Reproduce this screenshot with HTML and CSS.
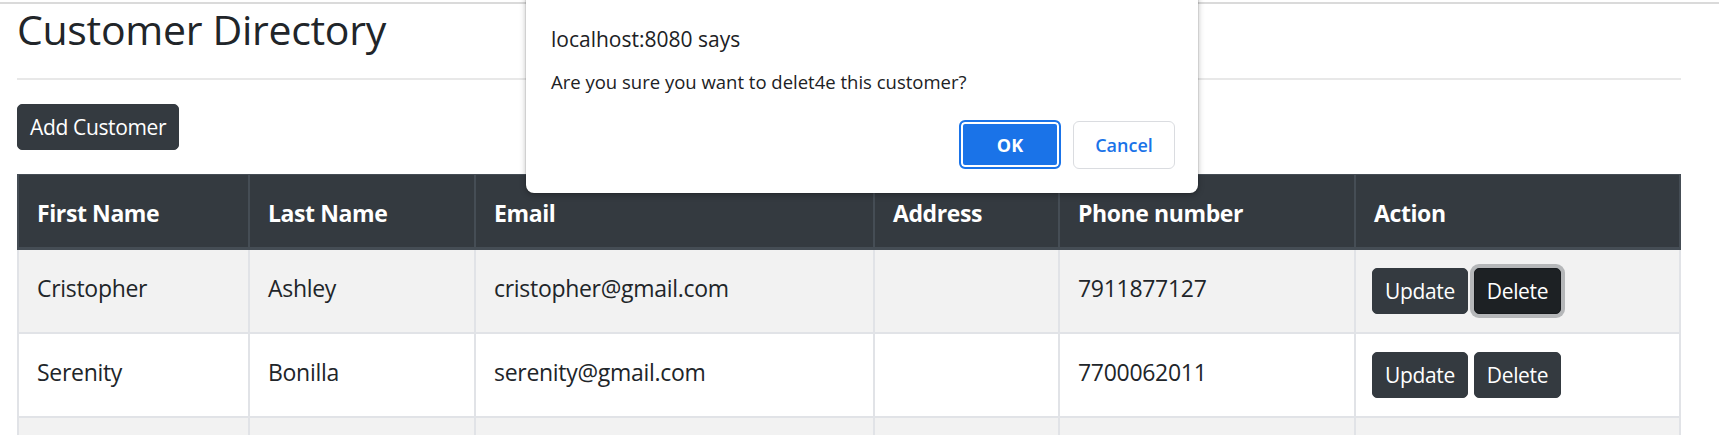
FILE: index.html
```html
<!DOCTYPE html>
<html lang="en">
<head>
<meta charset="utf-8">
<title>Customer Directory</title>
<link rel="stylesheet" href="styles.css">
</head>
<body>
<div class="edge"></div>
<main class="page">
  <h1 class="title">Customer Directory</h1>
  <hr class="rule">
  <button class="btn add">Add Customer</button>
  <table class="grid">
    <thead>
      <tr>
        <th class="c-first">First Name</th>
        <th class="c-last">Last Name</th>
        <th class="c-email">Email</th>
        <th class="c-addr">Address</th>
        <th class="c-phone">Phone number</th>
        <th class="c-action">Action</th>
      </tr>
    </thead>
    <tbody>
      <tr class="striped">
        <td>Cristopher</td>
        <td>Ashley</td>
        <td>cristopher@gmail.com</td>
        <td></td>
        <td>7911877127</td>
        <td class="actions"><button class="btn">Update</button> <button class="btn focused">Delete</button></td>
      </tr>
      <tr>
        <td>Serenity</td>
        <td>Bonilla</td>
        <td>serenity@gmail.com</td>
        <td></td>
        <td>7700062011</td>
        <td class="actions"><button class="btn">Update</button> <button class="btn">Delete</button></td>
      </tr>
      <tr class="striped">
        <td>&nbsp;</td>
        <td>&nbsp;</td>
        <td>&nbsp;</td>
        <td>&nbsp;</td>
        <td>&nbsp;</td>
        <td>&nbsp;</td>
      </tr>
    </tbody>
  </table>
</main>
<div class="dialog" role="alertdialog">
  <div class="dialog-title">localhost:8080 says</div>
  <div class="dialog-msg">Are you sure you want to delet4e this customer?</div>
  <div class="dialog-actions">
    <button class="dbtn ok">OK</button>
    <button class="dbtn cancel">Cancel</button>
  </div>
</div>
</body>
</html>
```
FILE: styles.css
```css
html, body {
  margin: 0;
  background: #fff;
}
body {
  font-family: "Open Sans", "Noto Sans", sans-serif;
  color: #212529;
  position: relative;
  height: 435px;
  overflow: hidden;
}
.edge {
  height: 2px;
  margin-top: 2px;
  background: #dadada;
}
.page {
  padding: 0 38px 0 17px;
}
.title {
  margin: 0;
  font-size: 41px;
  line-height: 50px;
  font-weight: 500;
  letter-spacing: -0.3px;
  color: #212529;
}
.rule {
  margin: 24px 0 0;
  border: 0;
  border-top: 2px solid #e8e8e8;
  height: 0;
}
.btn {
  font-family: inherit;
  font-size: 21px;
  letter-spacing: -0.35px;
  line-height: 32px;
  padding: 6px 12px;
  border: 1px solid #343a40;
  background: #343a40;
  color: #fff;
  border-radius: 5px;
  vertical-align: top;
}
.btn.focused {
  background: #1d2124;
  border-color: #171a1d;
  box-shadow: 0 0 0 4px rgba(82, 88, 93, 0.38);
}
.add {
  display: block;
  margin-top: 24px;
}
.grid {
  width: 1664px;
  margin-top: 24px;
  table-layout: fixed;
  border-collapse: separate;
  border-spacing: 0;
  font-size: 23px;
  letter-spacing: -0.3px;
  line-height: 40px;
}
.grid th, .grid td {
  box-sizing: border-box;
  padding: 18px 18px;
  text-align: left;
  vertical-align: top;
  white-space: nowrap;
}
.grid th {
  padding: 20px 18px 16px;
  line-height: 36px;
  letter-spacing: -0.4px;
  background: #343a40;
  color: #fff;
  font-weight: 700;
  border-top: 1px solid #454d55;
  border-bottom: 3px solid #454d55;
  border-right: 2px solid #454d55;
}
.grid th:first-child {
  border-left: 2px solid #454d55;
}
.grid td {
  border-right: 2px solid #e1e3e7;
  border-bottom: 2px solid #e1e3e7;
}
.grid td:first-child {
  border-left: 2px solid #e1e3e7;
}
.grid td.actions {
  padding-left: 16px;
  letter-spacing: 0;
}
.grid tr.striped td {
  background: #f2f2f2;
}
.c-first { width: 233px; }
.c-last { width: 226px; }
.c-email { width: 399px; }
.c-addr { width: 185px; }
.c-phone { width: 296px; }
.c-action { width: 325px; }

.dialog {
  position: absolute;
  left: 526px;
  top: -10px;
  width: 672px;
  height: 203px;
  box-sizing: border-box;
  padding: 35px 23px 0 25px;
  background: #fff;
  border-radius: 8px;
  box-shadow: 0 0 0 1px rgba(0, 0, 0, 0.07), 0 2px 6px rgba(0, 0, 0, 0.28);
  color: #202124;
  display: flex;
  flex-direction: column;
}
.dialog-title {
  font-size: 21px;
  line-height: 28px;
}
.dialog-msg {
  margin-top: 16px;
  font-size: 18.5px;
  line-height: 26px;
}
.dialog-actions {
  margin-top: 25px;
  display: flex;
  justify-content: flex-end;
  align-items: flex-end;
  gap: 12px;
}
.dbtn {
  font-family: inherit;
  font-size: 18px;
  font-weight: 600;
  width: 102px;
  border-radius: 6px;
  padding: 0;
}
.ok {
  height: 49px;
  background: #1a73e8;
  color: #fff;
  font-weight: 700;
  border: 2px solid #1a73e8;
  box-shadow: inset 0 0 0 2px #fff;
}
.cancel {
  height: 48px;
  background: #fff;
  color: #1a73e8;
  border: 1px solid #dadce0;
}
```
